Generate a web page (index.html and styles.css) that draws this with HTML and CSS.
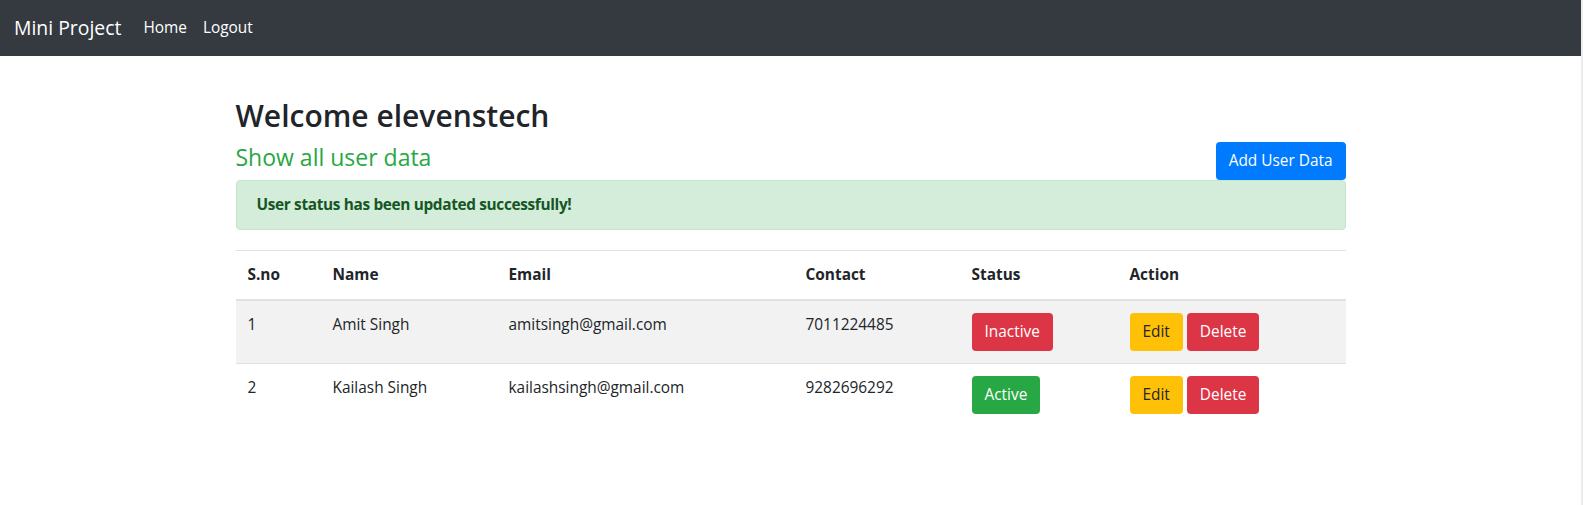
FILE: index.html
```html
<!DOCTYPE html>
<html lang="en">
<head>
  <meta charset="UTF-8">
  <title>Mini Project</title>
  <meta name="viewport" content="width=device-width, initial-scale=1.0">
  <link rel="stylesheet" href="styles.css">
</head>
<body>
  <nav class="navbar">
    <a class="brand" href="#">Mini Project</a>
    <ul class="nav-links">
      <li><a href="#">Home</a></li>
      <li><a href="#">Logout</a></li>
    </ul>
  </nav>

  <div class="container">
    <h2 class="welcome">Welcome elevenstech</h2>
    <div class="title-row">
      <h4 class="subtitle">Show all user data</h4>
      <a class="btn btn-primary" href="#">Add User Data</a>
    </div>

    <div class="alert">User status has been updated successfully!</div>

    <table class="users">
      <thead>
        <tr>
          <th class="col-sno">S.no</th>
          <th class="col-name">Name</th>
          <th class="col-email">Email</th>
          <th class="col-contact">Contact</th>
          <th class="col-status">Status</th>
          <th>Action</th>
        </tr>
      </thead>
      <tbody>
        <tr>
          <td>1</td>
          <td>Amit Singh</td>
          <td>amitsingh@gmail.com</td>
          <td>7011224485</td>
          <td><a class="btn btn-danger" href="#">Inactive</a></td>
          <td class="actions">
            <a class="btn btn-warning" href="#">Edit</a>
            <a class="btn btn-danger" href="#">Delete</a>
          </td>
        </tr>
        <tr>
          <td>2</td>
          <td>Kailash Singh</td>
          <td>kailashsingh@gmail.com</td>
          <td>9282696292</td>
          <td><a class="btn btn-success" href="#">Active</a></td>
          <td class="actions">
            <a class="btn btn-warning" href="#">Edit</a>
            <a class="btn btn-danger" href="#">Delete</a>
          </td>
        </tr>
      </tbody>
    </table>
  </div>
</body>
</html>
```

FILE: styles.css
```css
html {
  min-height: 100%;
  box-sizing: border-box;
  border-right: 2px solid #ececec;
}
body {
  margin: 0;
  font-family: "Segoe UI", "Open Sans", "Noto Sans", sans-serif;
  font-size: 15.4px;
  line-height: 24px;
  color: #212529;
  background: #fff;
}
a {
  text-decoration: none;
}

/* navbar */
.navbar {
  display: flex;
  align-items: center;
  height: 56px;
  padding: 0 16px 0 14px;
  background: #343a40;
  box-sizing: border-box;
}
.brand {
  font-size: 19.4px;
  color: #fff;
  margin-right: 14px;
}
.nav-links {
  display: flex;
  list-style: none;
  margin: 0;
  padding: 0;
}
.nav-links a {
  display: block;
  padding: 8px;
  color: #fff;
}

/* content */
.container {
  width: 1110px;
  margin: 0 auto;
  padding-top: 41px;
}
.welcome {
  margin: 0 0 8px;
  font-size: 30px;
  font-weight: 600;
  line-height: 37px;
}
.title-row {
  display: flex;
  justify-content: space-between;
  align-items: flex-end;
}
.subtitle {
  margin: 0 0 8px;
  font-size: 23px;
  font-weight: 500;
  line-height: 1.2;
  color: #28a745;
}

.btn {
  display: inline-block;
  padding: 6px 12px;
  line-height: 24px;
  border: 1px solid transparent;
  border-radius: 4px;
  color: #fff;
}
.btn-primary { background: #007bff; }
.btn-danger { background: #dc3545; }
.btn-success { background: #28a745; }
.btn-warning { background: #ffc107; color: #212529; }

.alert {
  padding: 12px 20px;
  margin-bottom: 20px;
  font-weight: 700;
  letter-spacing: -0.35px;
  color: #155724;
  background: #d4edda;
  border: 1px solid #c3e6cb;
  border-radius: 4px;
}

/* table */
.users {
  width: 100%;
  border-collapse: collapse;
  table-layout: fixed;
}
.users th,
.users td {
  padding: 12px;
  text-align: left;
  vertical-align: top;
  border-top: 1px solid #dee2e6;
}
.users th {
  font-weight: 700;
  border-bottom: 2px solid #dee2e6;
}
.users tbody tr:nth-child(odd) {
  background: #f2f2f2;
}
.users .actions {
  white-space: nowrap;
}
.col-sno { width: 61px; }
.col-name { width: 152px; }
.col-email { width: 273px; }
.col-contact { width: 142px; }
.col-status { width: 134px; }
```
